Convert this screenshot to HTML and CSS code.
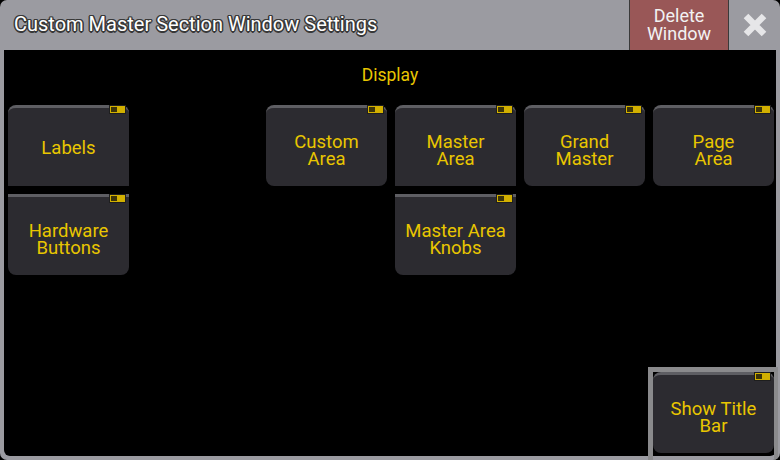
FILE: index.html
```html
<!DOCTYPE html>
<html lang="en">
<head>
    <meta charset="UTF-8">
    <title>Custom Master Section Window Settings</title>
    <link rel="stylesheet" href="styles.css">
</head>
<body>
    <div class="window">
        <div class="title-bar">
            <div class="title">Custom Master Section Window Settings</div>
            <button class="delete-btn">Delete<br>Window</button>
            <button class="close-btn">
                <svg width="26" height="26" viewBox="0 0 26 26">
                    <path d="M4 4 L22 22 M22 4 L4 22" stroke="#e6e6e8" stroke-width="6.5" fill="none"/>
                </svg>
            </button>
        </div>

        <div class="content">
            <div class="section-label">Display</div>
            <div class="grid">
                <div class="tile single join-bottom c1 r1"><span>Labels</span><i class="toggle"></i></div>
                <div class="tile c3 r1"><span>Custom<br>Area</span><i class="toggle"></i></div>
                <div class="tile join-bottom c4 r1"><span>Master<br>Area</span><i class="toggle"></i></div>
                <div class="tile c5 r1"><span>Grand<br>Master</span><i class="toggle"></i></div>
                <div class="tile c6 r1"><span>Page<br>Area</span><i class="toggle"></i></div>

                <div class="tile join-top c1 r2"><span>Hardware<br>Buttons</span><i class="toggle"></i></div>
                <div class="tile join-top c4 r2"><span>Master Area<br>Knobs</span><i class="toggle"></i></div>

                <div class="tile selected c6 r4"><span>Show Title<br>Bar</span><i class="toggle"></i></div>
            </div>
        </div>
    </div>
</body>
</html>
```

FILE: styles.css
```css
:root {
    --frame: #9b9ba1;
    --tile: #2c2b30;
    --tile-top: #5e5e63;
    --yellow: #e9c600;
}

body {
    margin: 0;
    background: #000;
    font-family: Roboto, "Liberation Sans", sans-serif;
}

.window {
    width: 780px;
    height: 460px;
    background: var(--frame);
    border-radius: 7px;
    display: flex;
    flex-direction: column;
    overflow: hidden;
}

.title-bar {
    height: 50px;
    display: flex;
    align-items: stretch;
    flex-shrink: 0;
}

.title {
    flex: 1;
    padding-left: 14px;
    display: flex;
    align-items: center;
    padding-bottom: 2px;
    font-size: 20px;
    color: #fff;
    text-shadow:
        -1px -1px 0 #383838, 1px -1px 0 #383838,
        -1px 1px 0 #383838, 1px 1px 0 #383838,
        0 -1.5px 0 #383838, 0 1.5px 0 #383838,
        -1.5px 0 0 #383838, 1.5px 0 0 #383838;
}

button {
    border: none;
    font-family: inherit;
    cursor: pointer;
    padding: 0;
}

.delete-btn {
    width: 100px;
    background: #995757;
    color: #f2f2f2;
    font-size: 18px;
    line-height: 18px;
    border-left: 1px solid #3a3a3a;
    border-right: 1px solid #3a3a3a;
    padding-bottom: 1px;
}

.close-btn {
    width: 51px;
    background: transparent;
    display: flex;
    align-items: center;
    justify-content: center;
    padding-bottom: 1px;
}

.content {
    flex: 1;
    margin: 0 4px 4px;
    background: #000;
    border-radius: 0 0 6px 6px;
    padding: 15px 0 0 4px;
}

.section-label {
    text-align: center;
    color: var(--yellow);
    font-size: 17.5px;
    line-height: 20px;
    margin: 0 0 20px -4px;
}

.grid {
    display: grid;
    grid-template-columns: repeat(6, 121px);
    grid-template-rows: repeat(4, 81px);
    gap: 8px;
}

.tile {
    position: relative;
    background: var(--tile);
    border-top: 3px solid var(--tile-top);
    border-radius: 8px;
    display: flex;
    align-items: center;
    justify-content: center;
    text-align: center;
    color: var(--yellow);
    font-size: 18.5px;
    line-height: 17px;
    box-sizing: border-box;
    padding-top: 8px;
}

.tile.single {
    padding-top: 3px;
}

.join-bottom { border-bottom-left-radius: 0; border-bottom-right-radius: 0; }
.join-top { border-top-left-radius: 0; border-top-right-radius: 0; }

.c1 { grid-column: 1; }
.c3 { grid-column: 3; }
.c4 { grid-column: 4; }
.c5 { grid-column: 5; }
.c6 { grid-column: 6; }
.r1 { grid-row: 1; }
.r2 { grid-row: 2; }
.r4 { grid-row: 4; }

.selected::before {
    content: "";
    position: absolute;
    left: -5px;
    top: -8px;
    right: -4px;
    bottom: -12px;
    border: 5px solid #8a8a8c;
    border-right-width: 4px;
    border-bottom: none;
}

.toggle {
    position: absolute;
    top: -3px;
    right: 3px;
    width: 15px;
    height: 7px;
    background: #d2b000;
    border: 1px solid #1e1e1e;
}

.toggle::before {
    content: "";
    position: absolute;
    left: 1px;
    top: 1px;
    width: 6px;
    height: 5px;
    background: #3c3408;
}
```
